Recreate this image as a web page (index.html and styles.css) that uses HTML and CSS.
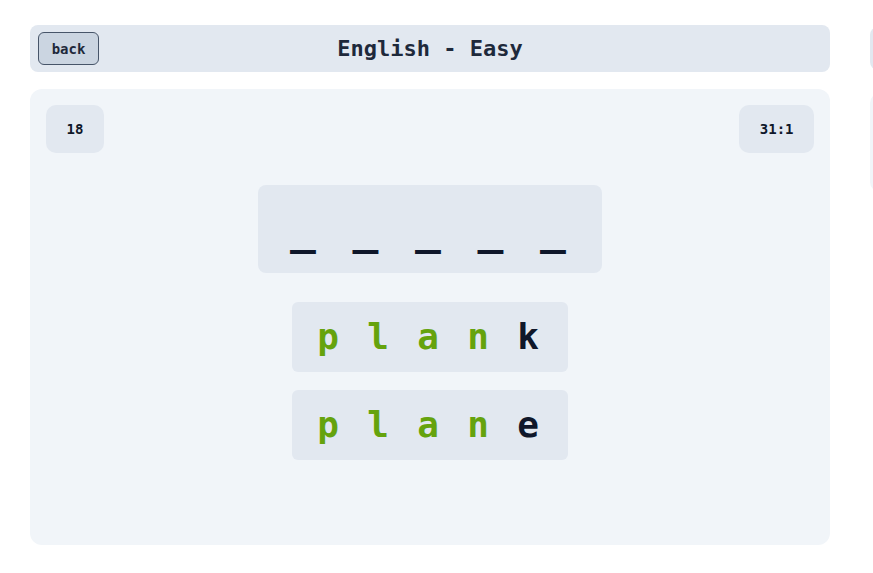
FILE: index.html
```html
<!DOCTYPE html>
<html lang="en">
<head>
<meta charset="utf-8">
<title>English - Easy</title>
<link rel="stylesheet" href="styles.css">
</head>
<body>
<div class="page">
  <main class="game">
    <header class="topbar">
      <div class="topbar-left"><button class="back-btn">back</button></div>
      <h1 class="title">English - Easy</h1>
      <div class="topbar-right"></div>
    </header>
    <section class="board">
      <div class="stats">
        <div class="stat">18</div>
        <div class="stat">31:1</div>
      </div>
      <div class="guess">
        <span class="slot">_</span><span class="slot">_</span><span class="slot">_</span><span class="slot">_</span><span class="slot">_</span>
      </div>
      <div class="attempts">
        <div class="word">
          <span class="ch ok">p</span><span class="ch ok">l</span><span class="ch ok">a</span><span class="ch ok">n</span><span class="ch">k</span>
        </div>
        <div class="word">
          <span class="ch ok">p</span><span class="ch ok">l</span><span class="ch ok">a</span><span class="ch ok">n</span><span class="ch">e</span>
        </div>
      </div>
    </section>
  </main>
  <aside class="side">
    <div class="side-head"></div>
    <div class="side-panel"></div>
  </aside>
</div>
</body>
</html>
```
FILE: styles.css
```css
html, body {
  margin: 0;
  padding: 0;
  overflow: hidden;
  background: #ffffff;
}
body {
  font-family: "DejaVu Sans Mono", "Liberation Mono", monospace;
  color: #1e293b;
}
.page {
  display: flex;
  gap: 40px;
  padding: 25px 0 25px 30px;
  width: 100vw;
  box-sizing: border-box;
  overflow: hidden;
}
.game {
  width: 800px;
  flex-shrink: 0;
  display: flex;
  flex-direction: column;
  gap: 17px;
}
.topbar {
  display: grid;
  grid-template-columns: 1fr auto 1fr;
  align-items: center;
  height: 47px;
  padding: 0 8px;
  box-sizing: border-box;
  background: #e2e8f0;
  border-radius: 8px;
}
.back-btn {
  font-family: inherit;
  font-weight: bold;
  font-size: 14px;
  color: #1e293b;
  background: #cbd5e1;
  border: 1px solid #475569;
  border-radius: 6px;
  width: 61px;
  height: 33px;
  padding: 0;
  cursor: pointer;
}
.title {
  margin: 0;
  font-size: 22px;
  font-weight: bold;
  color: #1e293b;
}
.board {
  background: #f1f5f9;
  border-radius: 12px;
  height: 456px;
  padding: 16px;
  box-sizing: border-box;
  display: flex;
  flex-direction: column;
  align-items: center;
}
.stats {
  align-self: stretch;
  display: flex;
  justify-content: space-between;
}
.stat {
  height: 48px;
  padding: 0 20.5px;
  display: flex;
  align-items: center;
  font-size: 14px;
  font-weight: bold;
  color: #0f172a;
  background: #e2e8f0;
  border-radius: 10px;
}
.guess {
  margin-top: 32px;
  display: flex;
  padding: 0 18px 0 14px;
  height: 88px;
  background: #e2e8f0;
  border-radius: 8px;
  line-height: 88px;
  font-size: 43px;
  font-weight: bold;
  color: #0f172a;
}
.slot {
  width: 62.5px;
  text-align: center;
}
.attempts {
  margin-top: 29px;
  display: flex;
  flex-direction: column;
  gap: 18px;
}
.word {
  display: flex;
  padding: 0 15px 0 11px;
  height: 70px;
  line-height: 70px;
  background: #e2e8f0;
  border-radius: 6px;
  font-size: 36px;
  font-weight: bold;
  color: #0f172a;
}
.ch {
  width: 50px;
  text-align: center;
}
.ch.ok {
  color: #65a30d;
}
.side {
  width: 300px;
  flex-shrink: 0;
  display: flex;
  flex-direction: column;
}
.side-head {
  margin-top: 2px;
  height: 43px;
  background: #e2e8f0;
  border-radius: 8px;
}
.side-panel {
  margin-top: 23px;
  height: 99px;
  background: #f1f5f9;
  border-radius: 10px;
}
```
